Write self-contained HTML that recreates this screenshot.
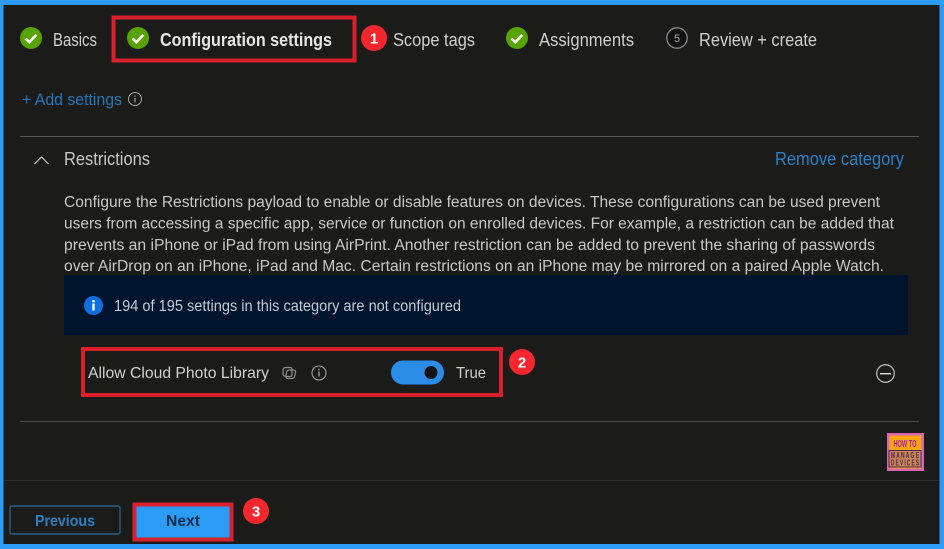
<!DOCTYPE html>
<html><head><meta charset="utf-8"><style>
html,body{margin:0;padding:0;background:#1b1b1b;width:944px;height:549px;overflow:hidden}
svg{display:block}
text{font-family:"Liberation Sans",sans-serif;}
.t{font-size:18px;fill:#cfcfcf}
.p{font-size:15.500px;fill:#c8c8c8}
</style></head><body>
<svg width="944" height="549" viewBox="0 0 944 549" xmlns="http://www.w3.org/2000/svg">
<rect width="944" height="549" fill="#2b9bf5"/>
<rect x="3.500" y="5" width="936" height="539" fill="#1b1b1a"/>

<!-- steps -->
<circle cx="31" cy="38" r="11" fill="#57a300"/>
<path d="M25.500 38.500l3.800 3.800 7-7.500" fill="none" stroke="#fff" stroke-width="2.600"/>
<text class="t" x="53" y="46" textLength="44" lengthAdjust="spacingAndGlyphs">Basics</text>

<rect x="113.500" y="17.500" width="241" height="43" fill="none" stroke="#d9202c" stroke-width="4"/>
<circle cx="138" cy="38" r="11" fill="#57a300"/>
<path d="M132.500 38.500l3.800 3.800 7-7.500" fill="none" stroke="#fff" stroke-width="2.600"/>
<text class="t" x="160" y="46" textLength="172" lengthAdjust="spacingAndGlyphs" font-weight="700" style="fill:#e6e6e6">Configuration settings</text>

<circle cx="374" cy="38" r="13" fill="#f5262d"/>
<text x="374" y="43.500" text-anchor="middle" font-size="15" font-weight="700" fill="#fff">1</text>
<text class="t" x="393" y="46" textLength="82" lengthAdjust="spacingAndGlyphs">Scope tags</text>

<circle cx="517" cy="38" r="11" fill="#57a300"/>
<path d="M511.500 38.500l3.800 3.800 7-7.500" fill="none" stroke="#fff" stroke-width="2.600"/>
<text class="t" x="539" y="46" textLength="95" lengthAdjust="spacingAndGlyphs">Assignments</text>

<circle cx="677" cy="38" r="10.200" fill="#111" stroke="#8a8a8a" stroke-width="1.300"/>
<text x="677" y="42" text-anchor="middle" font-size="11" fill="#aaa">5</text>
<text class="t" x="699" y="46" textLength="118" lengthAdjust="spacingAndGlyphs">Review + create</text>

<!-- add settings -->
<text x="22" y="105" font-size="16.500" fill="#2476b5" textLength="100" lengthAdjust="spacingAndGlyphs">+ Add settings</text>
<circle cx="135" cy="99" r="6.500" fill="none" stroke="#a5a5a5" stroke-width="1"/>
<rect x="134.400" y="98" width="1.200" height="4.500" fill="#a5a5a5"/><rect x="134.400" y="95.500" width="1.200" height="1.300" fill="#a5a5a5"/>

<rect x="20" y="136" width="899" height="1" fill="#555"/>

<!-- restrictions -->
<path d="M34.500 164l7-7 7 7" fill="none" stroke="#c4c4c4" stroke-width="1.200"/>
<text class="t" x="64" y="165" textLength="86" lengthAdjust="spacingAndGlyphs" style="fill:#c8c8c8">Restrictions</text>
<text x="775" y="165" font-size="18" fill="#2b80c5" textLength="129" lengthAdjust="spacingAndGlyphs">Remove category</text>

<text class="p" x="64" y="207" textLength="816" lengthAdjust="spacingAndGlyphs">Configure the Restrictions payload to enable or disable features on devices. These configurations can be used prevent</text>
<text class="p" x="64" y="228.500" textLength="830" lengthAdjust="spacingAndGlyphs">users from accessing a specific app, service or function on enrolled devices. For example, a restriction can be added that</text>
<text class="p" x="64" y="250" textLength="811" lengthAdjust="spacingAndGlyphs">prevents an iPhone or iPad from using AirPrint. Another restriction can be added to prevent the sharing of passwords</text>
<text class="p" x="64" y="271" textLength="820" lengthAdjust="spacingAndGlyphs">over AirDrop on an iPhone, iPad and Mac. Certain restrictions on an iPhone may be mirrored on a paired Apple Watch.</text>

<!-- banner -->
<rect x="64" y="275" width="844" height="60" fill="#00142e"/>
<circle cx="93.500" cy="305.500" r="9.500" fill="#0f6fe0"/>
<rect x="92.300" y="303.500" width="2.400" height="7" fill="#fff"/><rect x="92.300" y="300" width="2.400" height="2.300" fill="#fff"/>
<text x="114" y="311" font-size="15.500" fill="#c4c9d1" textLength="347" lengthAdjust="spacingAndGlyphs">194 of 195 settings in this category are not configured</text>

<!-- setting row -->
<rect x="83" y="349" width="418" height="46" fill="none" stroke="#d9202c" stroke-width="4"/>
<text x="88" y="378" font-size="16" fill="#d0d0d0" textLength="181" lengthAdjust="spacingAndGlyphs">Allow Cloud Photo Library</text>
<g fill="none" stroke="#8d8d8d" stroke-width="1.200">
<path d="M286 367.500h4q2 0 2 2v5q0 2-2 2h-4q-3 0-3-3v-3q0-3 3-3z"/>
<path d="M289 370h4q3 0 2.500 2.500l-.8 3.500q-.5 2.500-3 2.500h-3.500q-2.500 0-2.200-2.500l.5-3.500q.3-2.500 2.500-2.500z"/>
</g>
<circle cx="319" cy="373" r="7" fill="none" stroke="#a0a0a0" stroke-width="1.100"/>
<rect x="318.300" y="371.500" width="1.400" height="5" fill="#a0a0a0"/><rect x="318.300" y="368.800" width="1.400" height="1.500" fill="#a0a0a0"/>
<rect x="391" y="360.500" width="53" height="24" rx="12" fill="#2b8de8"/>
<circle cx="431" cy="372.500" r="6.500" fill="#141414"/>
<text x="456" y="378" font-size="16" fill="#d0d0d0" textLength="30" lengthAdjust="spacingAndGlyphs">True</text>

<circle cx="522" cy="362" r="13" fill="#f5262d"/>
<text x="522" y="367.500" text-anchor="middle" font-size="15" font-weight="700" fill="#fff">2</text>

<circle cx="885.500" cy="373.500" r="8.800" fill="none" stroke="#b5b5b5" stroke-width="1.300"/>
<rect x="880" y="373" width="11" height="1.400" fill="#ddd"/>

<rect x="20" y="421" width="899" height="1" fill="#4a4a4a"/>

<!-- logo -->
<rect x="887" y="433" width="37" height="38" fill="#d765b5"/>
<rect x="889.500" y="435.500" width="32" height="33" fill="#f9a50e"/>
<text x="893.500" y="447" font-size="10" font-weight="700" fill="#a61db5" textLength="23" lengthAdjust="spacingAndGlyphs">HOW TO</text>
<rect x="889" y="450.500" width="32" height="16.500" fill="#c9864a" stroke="#4b2a57" stroke-width="1"/>
<text x="891" y="458" font-size="8" font-weight="700" fill="#4a1f70" textLength="28" lengthAdjust="spacingAndGlyphs">M A N A G E</text>
<text x="891" y="465.500" font-size="8" font-weight="700" fill="#4a1f70" textLength="28" lengthAdjust="spacingAndGlyphs">D E V I C E S</text>

<rect x="3.500" y="480" width="936" height="1" fill="#2d2d2d"/>

<!-- footer -->
<rect x="10" y="506" width="110" height="28" rx="2" fill="none" stroke="#2c5f86" stroke-width="1.400"/>
<text x="35" y="526" font-size="15.500" font-weight="700" fill="#2f7fbe" textLength="60" lengthAdjust="spacingAndGlyphs">Previous</text>
<rect x="134.500" y="504.500" width="97" height="35" fill="#2b9bf5" stroke="#d9202c" stroke-width="4"/>
<text x="166" y="526" font-size="15.500" font-weight="700" fill="#10304e" textLength="34" lengthAdjust="spacingAndGlyphs">Next</text>
<circle cx="256" cy="511" r="13" fill="#f5262d"/>
<text x="256" y="516.500" text-anchor="middle" font-size="15" font-weight="700" fill="#fff">3</text>
</svg>
</body></html>
